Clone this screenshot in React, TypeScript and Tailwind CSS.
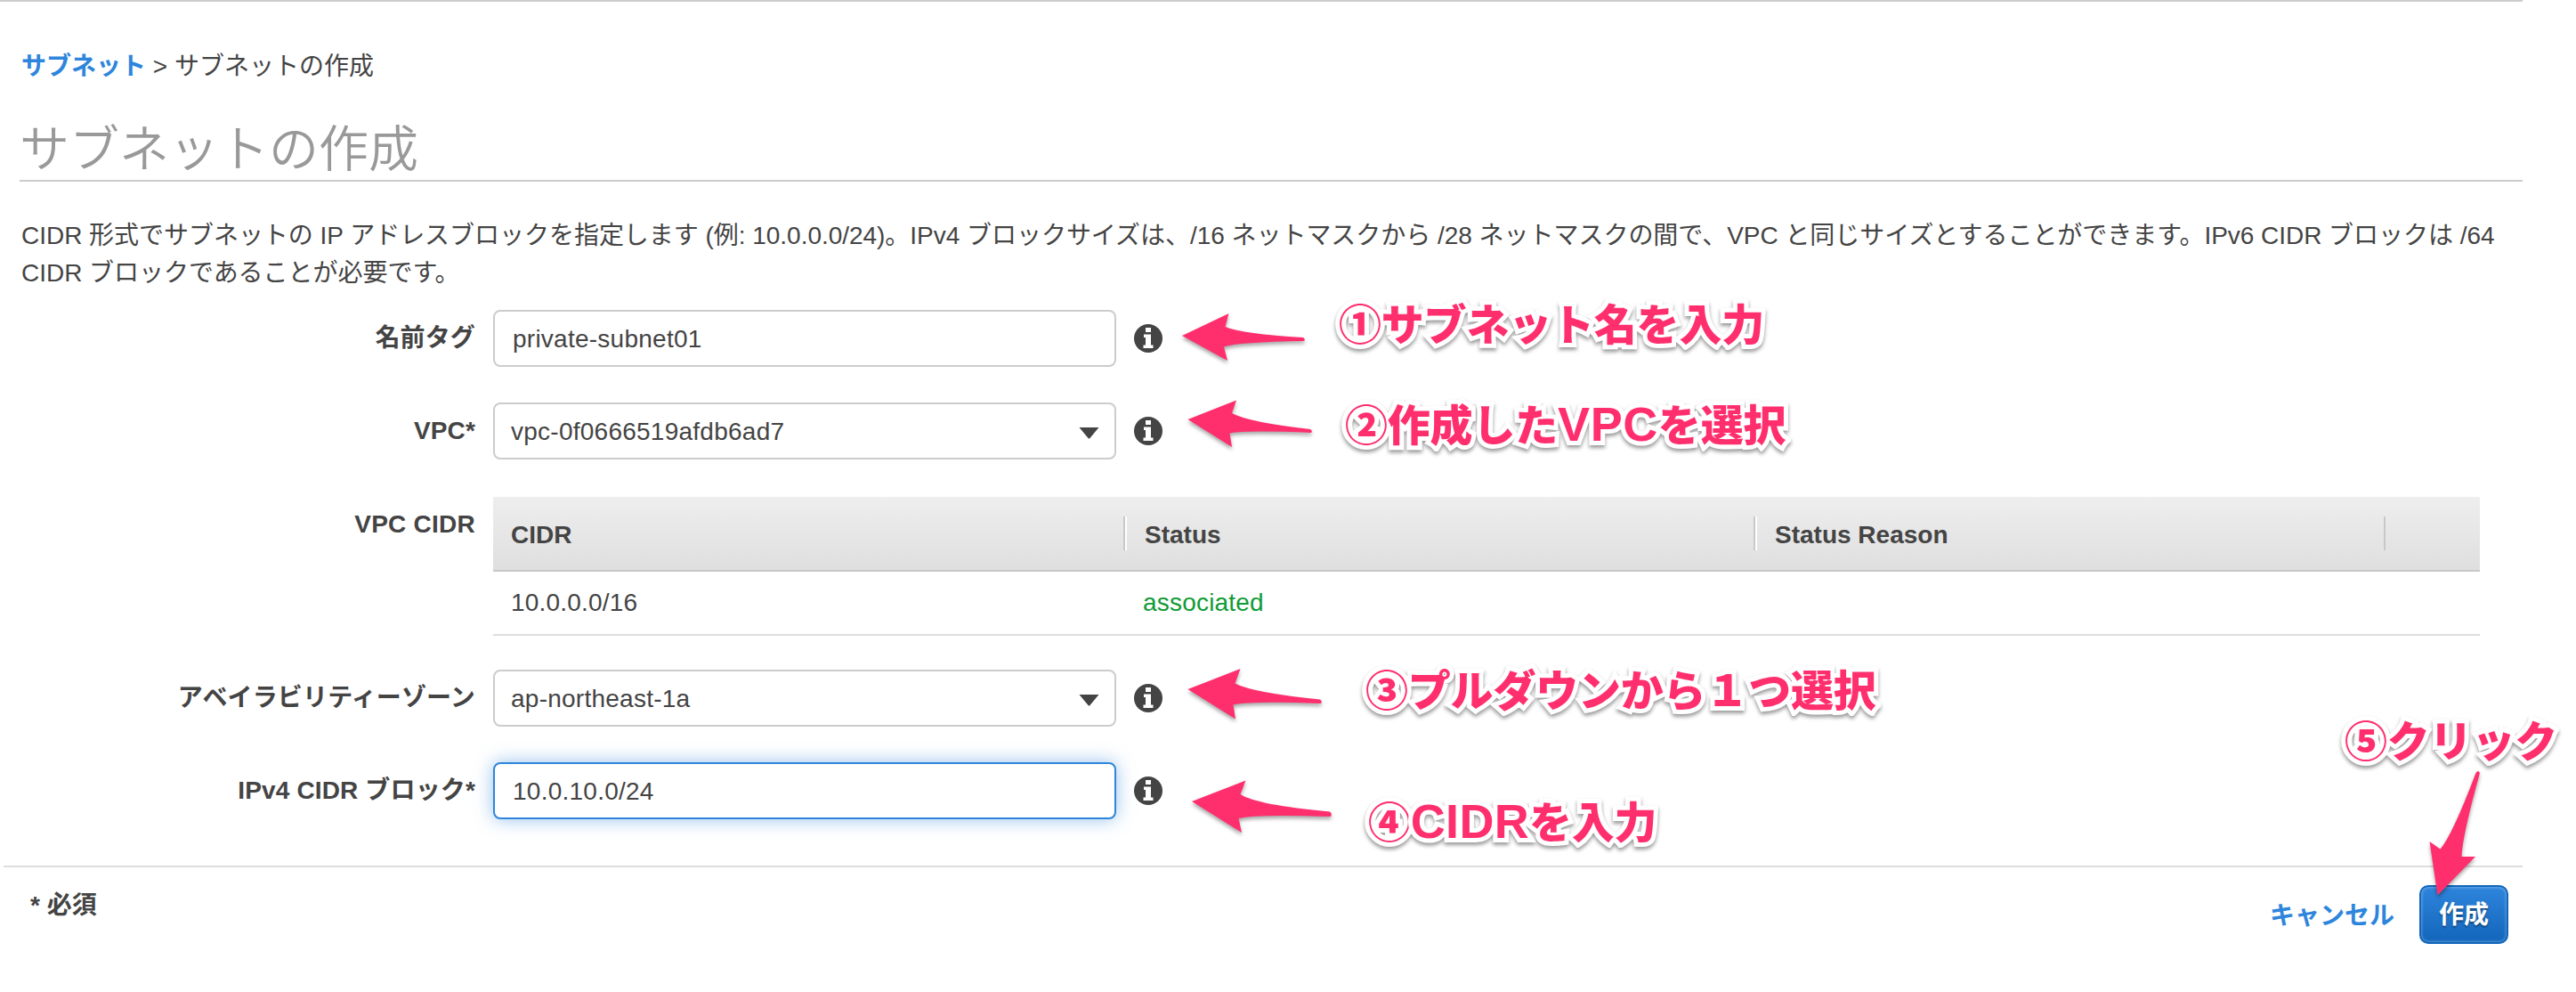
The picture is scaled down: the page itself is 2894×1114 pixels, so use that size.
import React from "react";

const INK = "text-[#444]";

function InfoIcon() {
  return (
    <svg className="ml-5 h-8 w-8 shrink-0" viewBox="0 0 32 32">
      <circle cx="16" cy="16" r="16" fill="#444" />
      <path d="M13 4h6v5h-6zM11 11.5h8v12h2.5v3.5h-11v-3.5H13v-8.500h-2z" fill="#fff" />
    </svg>
  );
}

function Caret() {
  return (
    <svg className="mr-[17px] mt-1 h-[13px] w-[23px]" viewBox="0 0 23 13">
      <path d="M0.500 0h22L12.500 12q-1 1-2 0z" fill="#444" />
    </svg>
  );
}

function Field({
  label,
  value,
  select = false,
  focused = false,
}: {
  label: string;
  value: string;
  select?: boolean;
  focused?: boolean;
}) {
  return (
    <div className="flex h-16 items-center">
      <div className="w-[534px] text-right font-bold tracking-[0.15px]">{label}</div>
      <div
        className={`ml-5 flex h-16 w-[700px] items-center justify-between rounded-lg border-2 bg-white tracking-[0.25px] ${
          select ? "pl-[18px]" : "pl-5"
        } ${
          focused
            ? "border-[#2e85dc] shadow-[0_0_20px_rgba(46,133,220,0.5)]"
            : "border-[#ccc]"
        }`}
      >
        <span className="pt-px">{value}</span>
        {select && <Caret />}
      </div>
      <InfoIcon />
    </div>
  );
}

function HeaderCell({ children, width }: { children?: React.ReactNode; width: string }) {
  return (
    <div className={`flex h-full items-center ${width}`}>
      <span
        className={`h-[38px] w-1 border-l-2 border-l-[#c8c8c8] ${
          children ? "border-r-2 border-r-white" : ""
        }`}
      />
      <span className="pl-5 pt-1">{children}</span>
    </div>
  );
}

function CidrTable() {
  return (
    <div className="ml-5 w-[2232px]">
      <div className="flex h-[84px] items-center border-b-2 border-[#c8c8c8] bg-linear-to-b from-[#eee] to-[#dfdfdf] font-bold">
        <div className="w-[708px] pl-5 pt-1">CIDR</div>
        <HeaderCell width="w-[708px]">Status</HeaderCell>
        <HeaderCell width="w-[708px]">Status Reason</HeaderCell>
        <HeaderCell width="w-[108px]" />
      </div>
      <div className="flex h-[72px] items-center border-b-2 border-[#ddd] tracking-[0.2px]">
        <div className="w-[708px] pl-5">10.0.0.0/16</div>
        <div className="pl-[22px] text-[#0f9b35]">associated</div>
      </div>
    </div>
  );
}

function Note({ place, children }: { place: string; children: React.ReactNode }) {
  return (
    <div
      className={`absolute whitespace-nowrap text-[48px] font-black leading-[60px] tracking-[-0.2px] text-[#ff2f6e] [-webkit-text-stroke:10px_white] [paint-order:stroke_fill] [stroke-linejoin:round] drop-shadow-[0_3px_2px_rgba(0,0,0,0.4)] ${place}`}
    >
      {children}
    </div>
  );
}

const ARROWS = [
  "M1328 377L1380.500 352L1376.500 367Q1396 375 1464 379Q1467 381 1465 383Q1390 384 1375 389.500L1379 405Z",
  "M1334.500 471L1389 449.500L1384 464Q1402 474 1472 482Q1475 484 1473 486Q1400 483 1381.500 486.500L1384 502Z",
  "M1334.500 774L1393.500 751L1387.500 767.500Q1408 778 1483 785.500Q1486 788 1484 790Q1405 787 1385.500 791.500L1388 807.500Z",
  "M1339 900L1399.500 876.500L1393.500 892Q1412 904 1494 911.500Q1497 914 1495 917Q1410 914 1391.500 919L1395 935Z",
  "M2738.500 1005.500L2729.500 945L2741.500 953.500Q2755 938 2781.500 868Q2784 864 2786 868Q2766 940 2765.500 962L2781 962Z",
];

function Arrows() {
  return (
    <svg
      className="pointer-events-none absolute left-0 top-0 h-[1114px] w-[2894px] drop-shadow-[0_3px_2px_rgba(0,0,0,0.35)]"
      viewBox="0 0 2894 1114"
      fill="#ff2f6e"
    >
      {ARROWS.map((d) => (
        <path key={d} d={d} />
      ))}
    </svg>
  );
}

export default function App() {
  return (
    <div
      lang="ja"
      className={`relative h-[1114px] w-[2894px] overflow-hidden bg-white font-['Liberation_Sans','Noto_Sans_CJK_JP',sans-serif] text-[28px] leading-[42px] [text-spacing-trim:space-all] ${INK}`}
    >
      <div className="w-[2834px] border-t-2 border-[#ccc]">
        <nav className="mt-[52px] pl-6">
          <a className="font-bold text-[#2e85dc]">サブネット</a>
          <span> &gt; サブネットの作成</span>
        </nav>
        <h1 className="ml-[22px] mt-[29px] h-[79px] border-b-2 border-[#ccc] text-[56px] font-[350] leading-[86px] text-[#999]">
          サブネットの作成
        </h1>
        <p className="mt-[40px] whitespace-nowrap pl-6 tracking-[-0.03px]">
          CIDR 形式でサブネットの IP アドレスブロックを指定します (例: 10.0.0.0/24)。IPv4 ブロックサイズは、/16
          ネットマスクから /28 ネットマスクの間で、VPC と同じサイズとすることができます。IPv6 CIDR ブロックは /64
          <br />
          CIDR ブロックであることが必要です。
        </p>

        <div className="mt-5 flex flex-col gap-10">
          <Field label="名前タグ" value="private-subnet01" />
          <Field label="VPC*" value="vpc-0f0666519afdb6ad7" select />
        </div>
        <div className="mt-[42px] flex items-start">
          <div className="w-[534px] pt-[10px] text-right font-bold tracking-[0.25px]">VPC CIDR</div>
          <CidrTable />
        </div>
        <div className="mt-[38px] flex flex-col gap-10">
          <Field label="アベイラビリティーゾーン" value="ap-northeast-1a" select />
          <Field label="IPv4 CIDR ブロック*" value="10.0.10.0/24" focused />
        </div>

        <footer className="ml-1 mt-[52px] flex justify-between border-t-2 border-[#ddd] pl-[30px] pr-4 pt-5">
          <div className="pt-0.5 font-bold">* 必須</div>
          <div className="flex items-center gap-7 font-bold">
            <a className="pt-[3px] text-[#2e85dc]">キャンセル</a>
            <button className="flex h-[66px] w-[100px] items-center justify-center rounded-[10px] border-2 border-[#1166bb] bg-linear-to-b from-[#2e85dc] to-[#1166bb] pt-0.5 font-bold text-white shadow-[inset_0_0_3px_1px_rgba(255,255,255,0.3)] [text-shadow:0_2px_2px_rgba(0,0,0,0.4)]">
              作成
            </button>
          </div>
        </footer>
      </div>

      <Arrows />
      <Note place="left-[1504px] top-[336px]">①サブネット名を入力</Note>
      <Note place="left-[1511px] top-[446px]">
        ②作成した<span className="text-[54px] tracking-[0.6px]">VPC</span>を選択
      </Note>
      <Note place="left-[1534px] top-[747px]">③プルダウンから１つ選択</Note>
      <Note place="left-[1537px] top-[892px]">
        ④<span className="text-[54px] tracking-[0.3px]">CIDR</span>を入力
      </Note>
      <Note place="left-[2634px] top-[804px]">⑤クリック</Note>
    </div>
  );
}
